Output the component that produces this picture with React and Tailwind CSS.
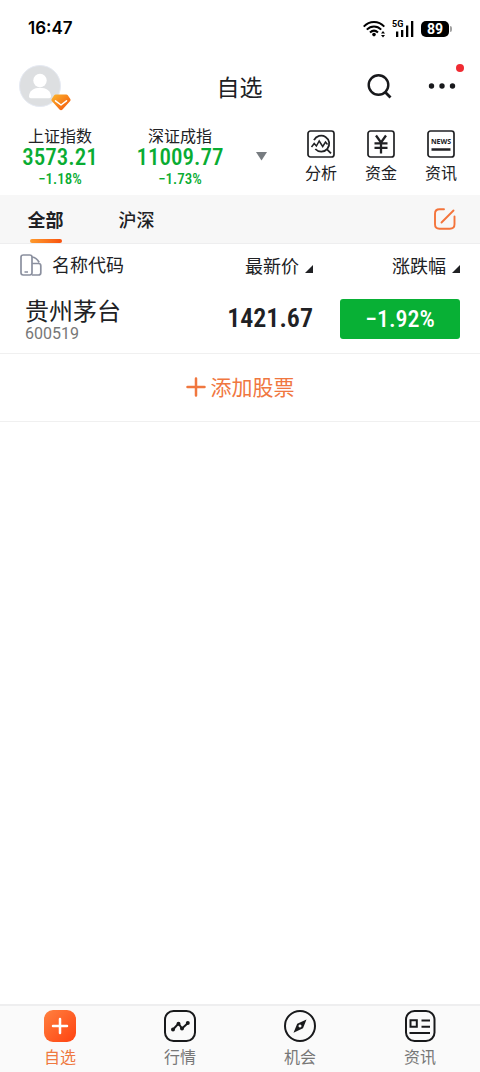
import React from "react";

const numberFont = "font-['Roboto_Condensed','Roboto',sans-serif]";

function StatusBar() {
  return (
    <div className="flex h-14 items-center justify-between pt-px pl-7 pr-7">
      <span className="font-['Inter','Roboto',sans-serif] text-[17px] font-semibold text-black">16:47</span>
      <div className="flex items-center gap-[7px]">
        <svg width="22" height="18" viewBox="0 0 22 18" fill="none" stroke="#000" strokeWidth="2" aria-hidden="true">
          <path d="M.7 6.6C6.5.5 15.500.5 21.300 6.600M3.800 9.600c4.300-4.200 10.100-4.200 14.400 0M7 12.500c2.500-2.400 5.500-2.400 8 0" />
          <circle cx="11" cy="14.600" r="1.800" fill="#000" stroke="none" />
          <path d="M18 13.600l2-2.600 2 2.600zM18 14.900l2 2.600 2-2.600z" fill="#000" stroke="none" />
        </svg>
        <svg width="22" height="20" viewBox="0 0 22 20" aria-hidden="true">
          <text x="0" y="8" fontFamily="Roboto, sans-serif" fontSize="9" fontWeight="700">5G</text>
          <path d="M4 12.500h2.300v5.500H4zM9 11h2.300v7H9zM14 6.500h2.300V18H14zM19 2h2.300v16H19z" fill="#000" />
        </svg>
        <div className="flex items-center gap-px">
          <span className="flex h-4 w-7 items-center justify-center rounded-[5px] bg-black font-['Roboto',sans-serif] text-[14px] leading-4 font-bold text-white">89</span>
          <span className="h-1.5 w-0.5 rounded-r bg-neutral-400" />
        </div>
      </div>
    </div>
  );
}

function Header() {
  return (
    <header className="grid h-15 grid-cols-3 items-center pl-[19px] pr-5">
      <button type="button" aria-label="我的" className="relative size-[42px]">
        <svg width="42" height="42" viewBox="0 0 42 42" aria-hidden="true">
          <circle cx="21" cy="21" r="20.500" fill="#dddfe1" stroke="#e5e9f2" />
          <circle cx="21" cy="15.500" r="6.700" fill="#fff" />
          <path d="M10 31.500C10 26 15 22.800 21 22.800s11 3.200 11 8.700q0 1.700-1.700 1.700H11.700Q10 33.200 10 31.500z" fill="#fff" />
        </svg>
        <svg className="absolute -right-2.5 -bottom-1" width="20" height="17" viewBox="0 0 20 17" aria-hidden="true">
          <defs>
            <linearGradient id="gem" x1="0" y1="0" x2="1" y2="1">
              <stop offset="0" stopColor="#fcb62c" />
              <stop offset="1" stopColor="#f4510c" />
            </linearGradient>
          </defs>
          <path d="M4.800.500h10.400q1 0 1.600.800l2.500 3.600q.700 1-.100 2l-7.700 8.600q-1.500 1.500-3 0L.800 6.900q-.800-1-.100-2l2.500-3.600Q3.800.500 4.800.500z" fill="url(#gem)" />
          <path d="M4.500 6.800l5.500 4.200 5.500-4.200" fill="none" stroke="#fff" strokeWidth="1.500" strokeLinecap="round" strokeLinejoin="round" />
        </svg>
      </button>
      <h1 className="text-center text-[23px] leading-8">自选</h1>
      <div className="flex items-center justify-end gap-[35px]">
        <button type="button" aria-label="搜索">
          <svg width="28" height="28" viewBox="0 0 28 28" fill="none" stroke="#18191c" strokeWidth="2.400" aria-hidden="true">
            <circle cx="13.500" cy="13" r="9.800" />
            <path d="M20.300 20.300l5.200 5.200" strokeWidth="2.800" />
          </svg>
        </button>
        <button type="button" aria-label="更多" className="relative pr-1">
          <svg width="28" height="28" viewBox="0 0 28 28" fill="#18191c" aria-hidden="true">
            <circle cx="3.500" cy="14" r="2.700" />
            <circle cx="14" cy="14" r="2.700" />
            <circle cx="24.500" cy="14" r="2.700" />
          </svg>
          <span className="absolute -top-2 -right-1 size-2 rounded-full bg-[#f02b32]" />
        </button>
      </div>
    </header>
  );
}

function IndexQuote({ name, value, change }) {
  return (
    <button type="button" className="flex w-[120px] flex-col items-center">
      <span className="text-[16px] leading-5">{name}</span>
      <span className={`${numberFont} text-[23px] leading-[26px] font-medium text-[#09ac32]`}>{value}</span>
      <span className={`${numberFont} text-[15px] leading-4 font-medium text-[#09ac32]`}>{change}</span>
    </button>
  );
}

function ToolButton({ label, children }) {
  return (
    <button type="button" className="flex w-[60px] flex-col items-center gap-0.5">
      <svg width="28" height="28" viewBox="0 0 28 28" fill="none" stroke="#202124" aria-hidden="true">
        <rect x="1" y="1" width="26" height="26" rx="2.500" strokeWidth="1.700" />
        {children}
      </svg>
      <span className="text-[16px] leading-6">{label}</span>
    </button>
  );
}

function IndexBar() {
  return (
    <section className="flex h-[79px] items-start justify-between pt-[9px] pr-[9px]">
      <div className="flex">
        <IndexQuote name="上证指数" value="3573.21" change="−1.18%" />
        <IndexQuote name="深证成指" value="11009.77" change="−1.73%" />
        <button type="button" aria-label="展开指数" className="flex w-[42px] items-center justify-center">
          <svg width="11" height="9" viewBox="0 0 11 9" fill="#777c80" aria-hidden="true">
            <path d="M0 0h11L5.500 8.500z" />
          </svg>
        </button>
      </div>
      <div className="flex pt-[5px]">
        <ToolButton label="分析">
          <path d="M7 10.200a8 8 0 1 1 1.300 8.800M20 19.300l4 4" strokeWidth="1.800" />
          <path d="M4.500 17l2.700-3.500 2.200 2.500 2.800-5 3.500 5.500 2.800-4.500 2 2.500" strokeWidth="1.500" />
        </ToolButton>
        <ToolButton label="资金">
          <path d="M9 5.500l5 7 5-7M14 12.500v11M7.500 13.300h13M7.500 17.800h13" strokeWidth="2.300" />
        </ToolButton>
        <ToolButton label="资讯">
          <text x="14" y="14" textAnchor="middle" fontFamily="Open Sans, sans-serif" fontSize="7" fontWeight="700" fill="#202124" stroke="none">NEWS</text>
          <path d="M4.500 19.500h19" strokeWidth="2.500" />
        </ToolButton>
      </div>
    </section>
  );
}

function GroupTabs() {
  return (
    <nav className="flex h-[49px] items-stretch border-b border-[#eeeeef] bg-[#f7f7f7] pr-6">
      <button type="button" className="flex w-[91px] flex-col items-center justify-between pt-[10px] text-[18px] leading-7 font-bold">
        全部
        <span className="h-1 w-8 rounded-full bg-linear-to-r from-[#fd9a2c] to-[#f8500e]" />
      </button>
      <button type="button" className="flex w-[91px] flex-col items-center pt-[10px] text-[18px] leading-7 font-medium">沪深</button>
      <button type="button" aria-label="编辑" className="ml-auto">
        <svg width="22" height="22" viewBox="0 0 22 22" fill="none" stroke="#f4743b" strokeWidth="1.900" strokeLinecap="round" aria-hidden="true">
          <path d="M10 1.200H5.500Q1 1.200 1 5.700v10.600q0 4.500 4.500 4.500h10.300q4.700 0 4.700-4.500V8.500M7.500 14.500L19.500 2.500" />
        </svg>
      </button>
    </nav>
  );
}

function SortMark() {
  return (
    <svg width="8" height="8" viewBox="0 0 8 8" fill="#202124" aria-hidden="true">
      <path d="M8 0v8H0z" />
    </svg>
  );
}

function StockTable() {
  return (
    <table className="w-full">
      <thead>
        <tr className="h-[41px] text-[18px]">
          <th className="pl-5 text-left font-normal">
            <span className="flex items-center gap-[10px]">
              <svg width="22" height="22" viewBox="0 0 22 22" fill="none" stroke="#8b909f" strokeWidth="1.700" aria-hidden="true">
                <rect x="1" y="1" width="11" height="20" rx="2.200" />
                <path d="M4.500 18h3.500M12 9.500h6.500q2.300 0 2.300 2.300v6.900q0 2.300-2.300 2.300H12M12 3q4.500 .5 7.200 5.500" />
              </svg>
              名称代码
            </span>
          </th>
          <th className="font-normal">
            <button type="button" className="ml-auto flex items-end gap-[6px] leading-6"><span>最新价</span><span className="pb-1"><SortMark /></span></button>
          </th>
          <th className="w-[167px] pr-5 font-normal">
            <button type="button" className="ml-auto flex items-end gap-[6px] leading-6"><span>涨跌幅</span><span className="pb-1"><SortMark /></span></button>
          </th>
        </tr>
      </thead>
      <tbody>
        <tr className="h-[68px] border-b border-[#f0f0f0]">
          <td className="pl-[25px]">
            <div className="text-[24px] leading-[30px]">贵州茅台</div>
            <div className="font-['Roboto',sans-serif] text-[16px] leading-[18px] text-[#777]">600519</div>
          </td>
          <td className={`${numberFont} text-right text-[26px] font-semibold`}>1421.67</td>
          <td className="w-[167px] pr-5">
            <div className={`${numberFont} ml-auto flex h-10 w-[120px] items-center justify-center rounded-[3px] bg-[#08b035] text-[24px] font-medium text-white`}>−1.92%</div>
          </td>
        </tr>
      </tbody>
    </table>
  );
}

function NavItem({ label, active, children }) {
  return (
    <a href="#" className={`flex flex-1 flex-col items-center gap-0.5 text-[16px] leading-6 ${active ? "text-[#ef7840]" : "text-[#777]"}`}>
      <svg width="32" height="32" viewBox="0 0 32 32" fill="none" stroke="#18191b" strokeWidth="2" aria-hidden="true">{children}</svg>
      {label}
    </a>
  );
}

function BottomNav() {
  return (
    <nav className="mt-auto flex h-[68px] border-t-2 border-[#eeeeef] bg-[#fafafa] pt-1">
      <NavItem label="自选" active>
        <defs>
          <linearGradient id="home" x1="0" y1="0" x2="1" y2="1">
            <stop offset="0" stopColor="#ff8140" />
            <stop offset="1" stopColor="#ff4210" />
          </linearGradient>
        </defs>
        <rect width="32" height="32" rx="9" fill="url(#home)" stroke="none" />
        <path d="M16 9v14M9 16h14" stroke="#fff" strokeWidth="2.500" strokeLinecap="round" />
      </NavItem>
      <NavItem label="行情">
        <rect x="1" y="1" width="30" height="30" rx="8.500" />
        <path d="M9 19.500l5.500-6 3.500 5 6-5.500" />
        <g fill="#18191b" stroke="none">
          <circle cx="9" cy="19.500" r="2" /><circle cx="14.500" cy="13.800" r="2" /><circle cx="18" cy="18.500" r="2" /><circle cx="23.800" cy="13" r="2" />
        </g>
      </NavItem>
      <NavItem label="机会">
        <circle cx="16" cy="16" r="15" />
        <path fillRule="evenodd" stroke="none" fill="#18191b" d="M22.500 9.500L19 18.200 9.500 22.800 13.200 13.700zM16 14.500a1.500 1.500 0 1 0 .010 0z" />
      </NavItem>
      <NavItem label="资讯">
        <rect x="2" y="1" width="28.500" height="30" rx="8.500" />
        <path d="M6.500 10.200h6.300v6.600H6.500zM17.500 10.500H26M17.500 16.700H26M5.500 23H26" />
      </NavItem>
    </nav>
  );
}

export default function App() {
  return (
    <div className="flex min-h-screen flex-col bg-white font-['Noto_Sans_CJK_SC',sans-serif] text-[#202124]">
      <StatusBar />
      <Header />
      <IndexBar />
      <main>
        <GroupTabs />
        <StockTable />
        <button type="button" className="flex h-[68px] w-full items-center justify-center gap-[5px] border-b border-[#f0f0f0] text-[21px] text-[#f0773f]">
          <svg width="20" height="20" viewBox="0 0 20 20" stroke="currentColor" strokeWidth="2.500" strokeLinecap="round" aria-hidden="true">
            <path d="M10 1.500v17M1.500 10h17" />
          </svg>
          添加股票
        </button>
      </main>
      <BottomNav />
    </div>
  );
}
